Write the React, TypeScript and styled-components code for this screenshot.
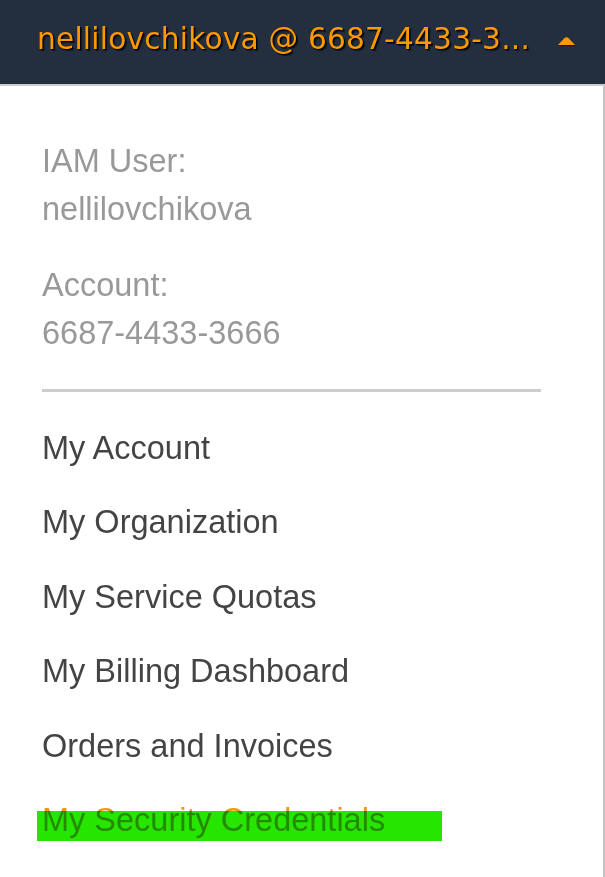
import React from "react";
import styled, { createGlobalStyle } from "styled-components";

const Global = createGlobalStyle`
  html, body { margin: 0; padding: 0; background: #ffffff; }
  body { font-family: "Liberation Sans", Arial, sans-serif; }
`;

const Page = styled.div`
  width: 605px;
  height: 877px;
  display: flex;
  flex-direction: column;
  overflow: hidden;
`;

const Header = styled.div`
  height: 84px;
  background: #232f3e;
  display: flex;
  align-items: center;
  padding: 0 29px 6px 37px;
  box-sizing: border-box;
  gap: 20px;
`;

const HeaderLabel = styled.span`
  font-family: "DejaVu Sans", Verdana, sans-serif;
  font-size: 29.6px;
  line-height: 36px;
  letter-spacing: 0.22px;
  color: #ff9900;
  text-shadow: 1px 1px 0 #000000, 2px 2px 1px rgba(0, 0, 0, 0.55);
  white-space: nowrap;
  flex: 1;
`;

const Caret = styled.svg`
  width: 19px;
  height: 9px;
  margin-top: 4px;
  flex: none;
`;

const Panel = styled.div`
  flex: 1;
  background: #ffffff;
  border-top: 2px solid #cccccc;
  border-right: 2px solid #c4c4c4;
  padding: 51px 0 0 42px;
  box-sizing: border-box;
  display: flex;
  flex-direction: column;
`;

const InfoBlock = styled.div`
  display: flex;
  flex-direction: column;
  & + & {
    margin-top: 28px;
  }
`;

const InfoLine = styled.div`
  font-size: 32.5px;
  line-height: 48px;
  color: #999999;
`;

const Divider = styled.hr`
  width: 499px;
  margin: 32px 0 19px 0;
  border: none;
  border-top: 3px solid #cccccc;
`;

const Menu = styled.ul`
  list-style: none;
  margin: 0;
  padding: 0;
  display: flex;
  flex-direction: column;
`;

const MenuItem = styled.li<{ $active?: boolean }>`
  position: relative;
  font-size: 32.5px;
  line-height: 74.4px;
  color: ${(p) => (p.$active ? "#ec9a14" : "#444444")};
`;

const Highlight = styled.span`
  position: absolute;
  left: -5px;
  top: 28px;
  width: 405px;
  height: 30px;
  background: #26e600;
  mix-blend-mode: multiply;
`;

const items = [
  "My Account",
  "My Organization",
  "My Service Quotas",
  "My Billing Dashboard",
  "Orders and Invoices",
];

export default function App() {
  return (
    <Page>
      <Global />
      <Header>
        <HeaderLabel>nellilovchikova @ 6687-4433-3...</HeaderLabel>
        <Caret viewBox="0 0 19 9">
          <polygon points="8,1.5 11,1.5 18.5,9 0.5,9" fill="#000" opacity="0.45" transform="translate(0.6,0.6)" />
          <polygon points="8,0.5 11,0.5 18,8 1,8" fill="#ff9900" />
        </Caret>
      </Header>
      <Panel>
        <InfoBlock>
          <InfoLine>IAM User:</InfoLine>
          <InfoLine>nellilovchikova</InfoLine>
        </InfoBlock>
        <InfoBlock>
          <InfoLine>Account:</InfoLine>
          <InfoLine>6687-4433-3666</InfoLine>
        </InfoBlock>
        <Divider />
        <Menu>
          {items.map((t) => (
            <MenuItem key={t}>{t}</MenuItem>
          ))}
          <MenuItem $active>
            My Security Credentials
            <Highlight />
          </MenuItem>
        </Menu>
      </Panel>
    </Page>
  );
}
